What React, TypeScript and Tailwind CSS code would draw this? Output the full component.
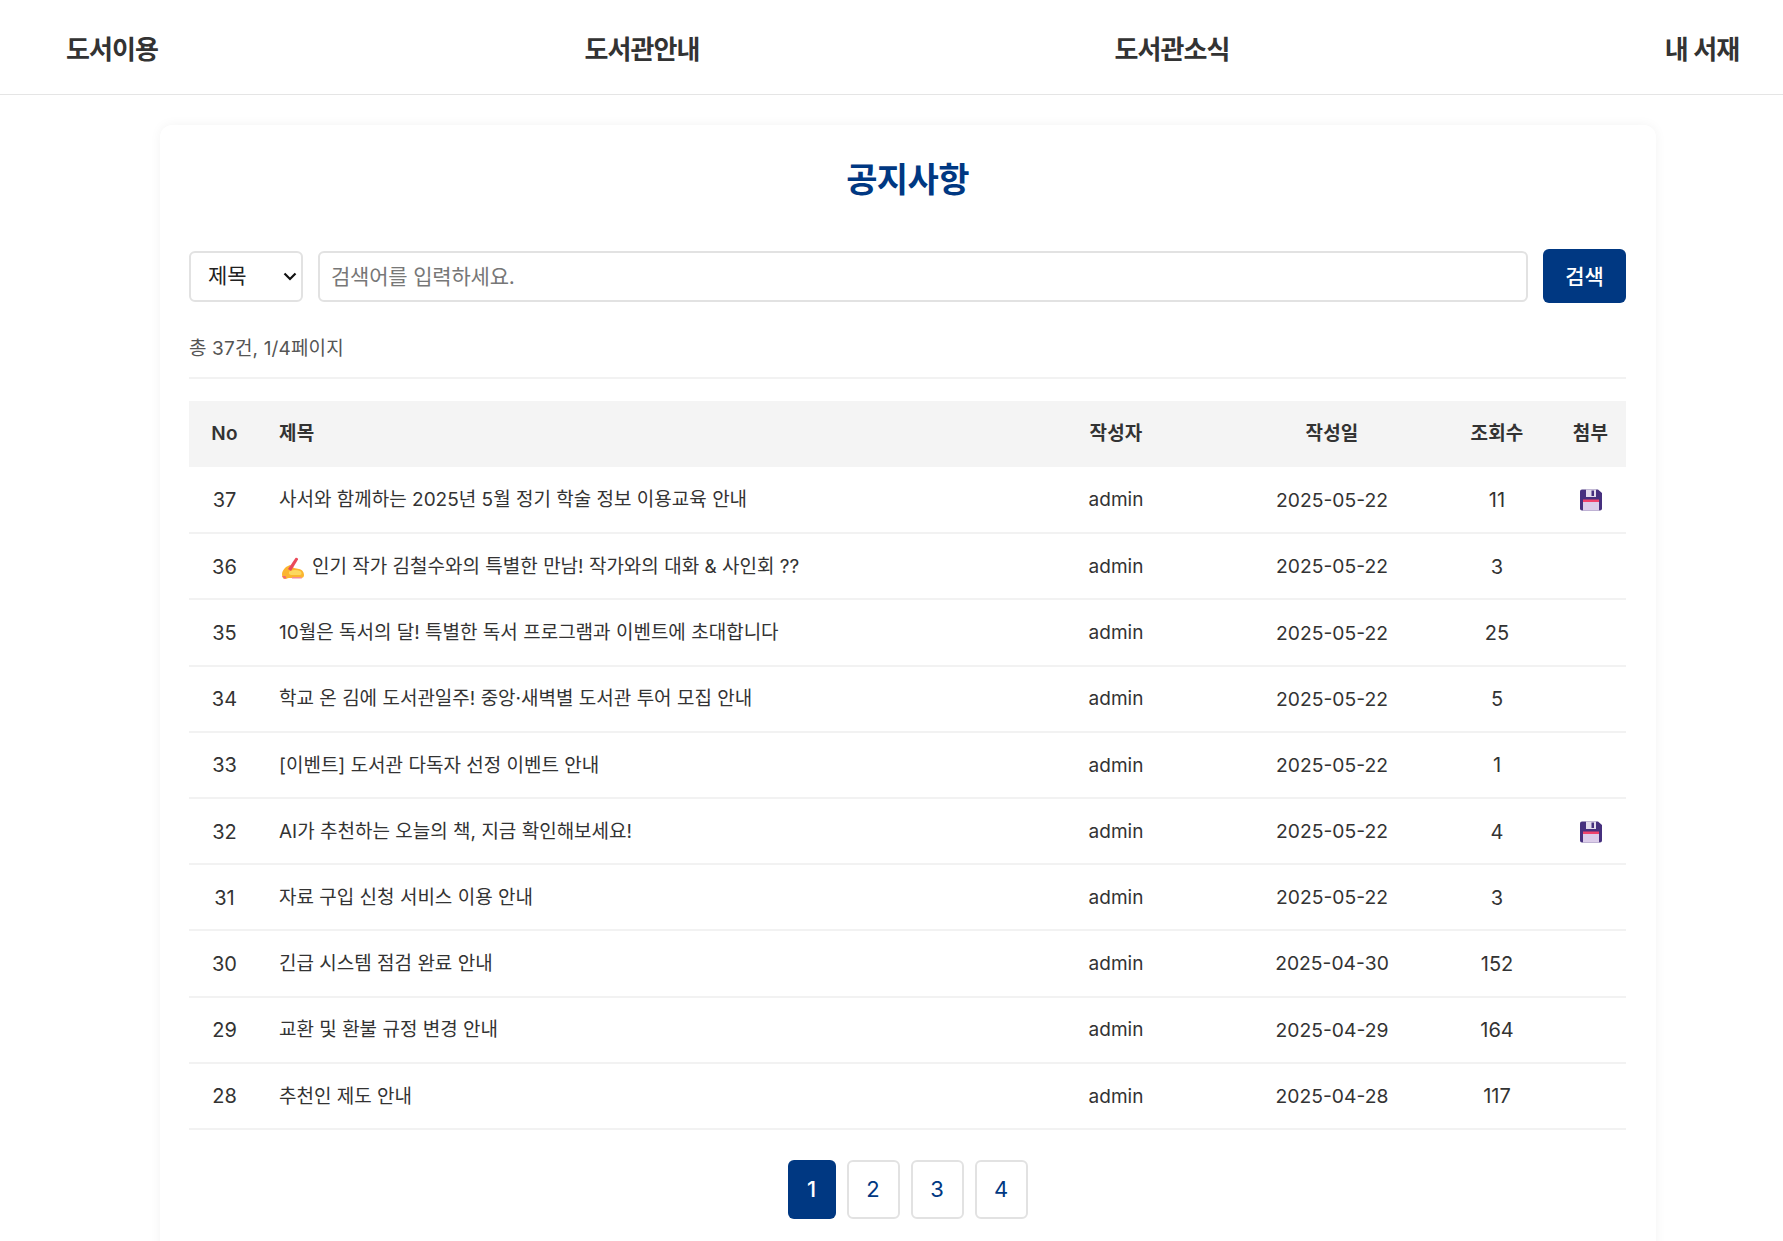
const rows = [
  { no: 37, title: "사서와 함께하는 2025년 5월 정기 학술 정보 이용교육 안내", date: "2025-05-22", views: 11, file: true },
  { no: 36, title: "인기 작가 김철수와의 특별한 만남! 작가와의 대화 & 사인회 ??", date: "2025-05-22", views: 3, emoji: true },
  { no: 35, title: "10월은 독서의 달! 특별한 독서 프로그램과 이벤트에 초대합니다", date: "2025-05-22", views: 25 },
  { no: 34, title: "학교 온 김에 도서관일주! 중앙·새벽별 도서관 투어 모집 안내", date: "2025-05-22", views: 5 },
  { no: 33, title: "[이벤트] 도서관 다독자 선정 이벤트 안내", date: "2025-05-22", views: 1 },
  { no: 32, title: "AI가 추천하는 오늘의 책, 지금 확인해보세요!", date: "2025-05-22", views: 4, file: true },
  { no: 31, title: "자료 구입 신청 서비스 이용 안내", date: "2025-05-22", views: 3 },
  { no: 30, title: "긴급 시스템 점검 완료 안내", date: "2025-04-30", views: 152 },
  { no: 29, title: "교환 및 환불 규정 변경 안내", date: "2025-04-29", views: 164 },
  { no: 28, title: "추천인 제도 안내", date: "2025-04-28", views: 117 },
];

function FloppyIcon() {
  return (
    <svg width="22" height="22" viewBox="0 0 22 22" className="inline-block align-middle">
      <path d="M0 2.500a2 2 0 0 1 2-2h16l4 3.500v15.500a2 2 0 0 1-2 2H2a2 2 0 0 1-2-2z" fill="#46307e" />
      <rect x="6" y="0.500" width="10" height="7.500" fill="#e3dcec" />
      <rect x="11.500" y="1.500" width="2.500" height="5.500" fill="#46307e" />
      <rect x="3" y="10.500" width="16" height="2.500" fill="#f0446c" />
      <rect x="3" y="13" width="16" height="8.500" fill="#dccdea" />
    </svg>
  );
}

function WritingHandIcon() {
  return (
    <svg width="24" height="24" viewBox="0 0 24 24" className="inline-block align-middle">
      <path d="M1 18c0-3 2-5 4-7l4-2 4 3 5 1c3 .5 5 3 5 6 0 2-1 3-3 3H8c-2 0-2 1-4 1-2 0-3-2-3-5z" fill="#fbb52f" />
      <path d="M9 15c3-1.500 7-1.500 10 0 2 1 2 4 0 4H10c-2 0-3-3-1-4z" fill="#fcd85f" />
      <path d="M7 13 14.500 2c.8-1 3 .2 2.500 1.500L10 15z" fill="#ea4a5a" />
      <path d="M1 20h3.500l1 2.500H3z" fill="#f26a6f" />
      <path d="M11 21h9l1 1.500H11z" fill="#f58a93" />
    </svg>
  );
}

export default function App() {
  return (
    <div className="min-h-[1241px] overflow-hidden bg-white font-['Inter','Noto_Sans_CJK_KR',sans-serif] text-[#333]">
      <header className="flex h-[95px] items-center justify-between border-b border-[#e5e5e5] pl-[52px] pr-[21px] pt-[5px] text-[26px] font-semibold tracking-[-0.9px] text-[#333]">
        <a className="w-[120px] whitespace-nowrap text-center">도서이용</a>
        <a className="w-[120px] whitespace-nowrap text-center">도서관안내</a>
        <a className="w-[120px] whitespace-nowrap text-center">도서관소식</a>
        <a className="w-[120px] whitespace-nowrap text-center">내 서재</a>
      </header>

      <main className="ml-[160px] mt-[30px] w-[1496px] rounded-xl bg-white pb-[40px] pl-[29px] pr-[30px] pt-[32px] shadow-[0_0_12px_rgba(0,0,0,0.05)]">
        <h1 className="h-[46px] text-center text-[34px] font-bold leading-[46px] tracking-[-0.6px] text-[#003882]">공지사항</h1>

        <form className="mt-[46px] flex items-center">
          <div className="relative h-[51px] w-[114px]">
            <select className="h-full w-full appearance-none rounded-[6px] border-2 border-[#e2e2e2] bg-white pl-[17px] text-[21px] text-[#222]">
              <option>제목</option>
            </select>
            <svg width="14" height="9" viewBox="0 0 14 9" className="pointer-events-none absolute right-[6px] top-[21px]">
              <path d="M1.500 1.500 7 7l5.500-5.500" fill="none" stroke="#111" strokeWidth="2.200" />
            </svg>
          </div>
          <input
            placeholder="검색어를 입력하세요."
            className="ml-[15px] h-[51px] flex-1 rounded-[6px] border-2 border-[#e2e2e2] px-[11px] text-[21px] tracking-[-0.2px] placeholder:text-[#777]"
          />
          <button type="button" className="ml-[15px] h-[54px] w-[83px] rounded-[6px] bg-[#003882] pt-[1px] text-[21px] font-medium text-white">검색</button>
        </form>

        <div className="mt-[33px] border-b-2 border-[#f2f2f2] pb-[15px] text-[19px] leading-[26px] tracking-[0.15px] text-[#555]">총 37건, 1/4페이지</div>

        <table className="mt-[22px] w-full table-fixed border-collapse text-[19px]">
          <colgroup>
            <col className="w-[71px]" />
            <col />
            <col className="w-[218px]" />
            <col className="w-[214px]" />
            <col className="w-[116px]" />
            <col className="w-[71px]" />
          </colgroup>
          <thead>
            <tr className="h-[66px] bg-[#f4f4f4] font-semibold tracking-[0.2px] text-[#333]">
              <th className="font-semibold">No</th>
              <th className="pl-[19px] text-left font-semibold">제목</th>
              <th className="font-semibold">작성자</th>
              <th className="font-semibold">작성일</th>
              <th className="font-semibold">조회수</th>
              <th className="font-semibold">첨부</th>
            </tr>
          </thead>
          <tbody>
            {rows.map((r) => (
              <tr key={r.no} className="h-[66.2px] border-b-2 border-[#f2f2f2] text-center">
                <td className="pt-[1px] text-[20px]">{r.no}</td>
                <td className="pl-[19px] pt-[2px] text-left">
                  {r.emoji && <span className="ml-[2px] mr-[7px]"><WritingHandIcon /></span>}
                  {r.title}
                </td>
                <td className="pt-[2px]">admin</td>
                <td className="pt-[1px] text-[19.300px]">{r.date}</td>
                <td className="pt-[1px] text-[20px]">{r.views}</td>
                <td>{r.file && <FloppyIcon />}</td>
              </tr>
            ))}
          </tbody>
        </table>

        <nav className="mt-[30px] flex justify-center gap-[11px] text-[22px] text-[#003882]">
          <span className="flex h-[59px] w-[48px] items-center justify-center rounded-[6px] bg-[#003882] font-medium text-white">1</span>
          {[2, 3, 4].map((n) => (
            <span key={n} className="flex h-[59px] w-[53px] items-center justify-center rounded-[6px] border-2 border-[#e2e2e2] bg-white">{n}</span>
          ))}
        </nav>
      </main>
    </div>
  );
}
